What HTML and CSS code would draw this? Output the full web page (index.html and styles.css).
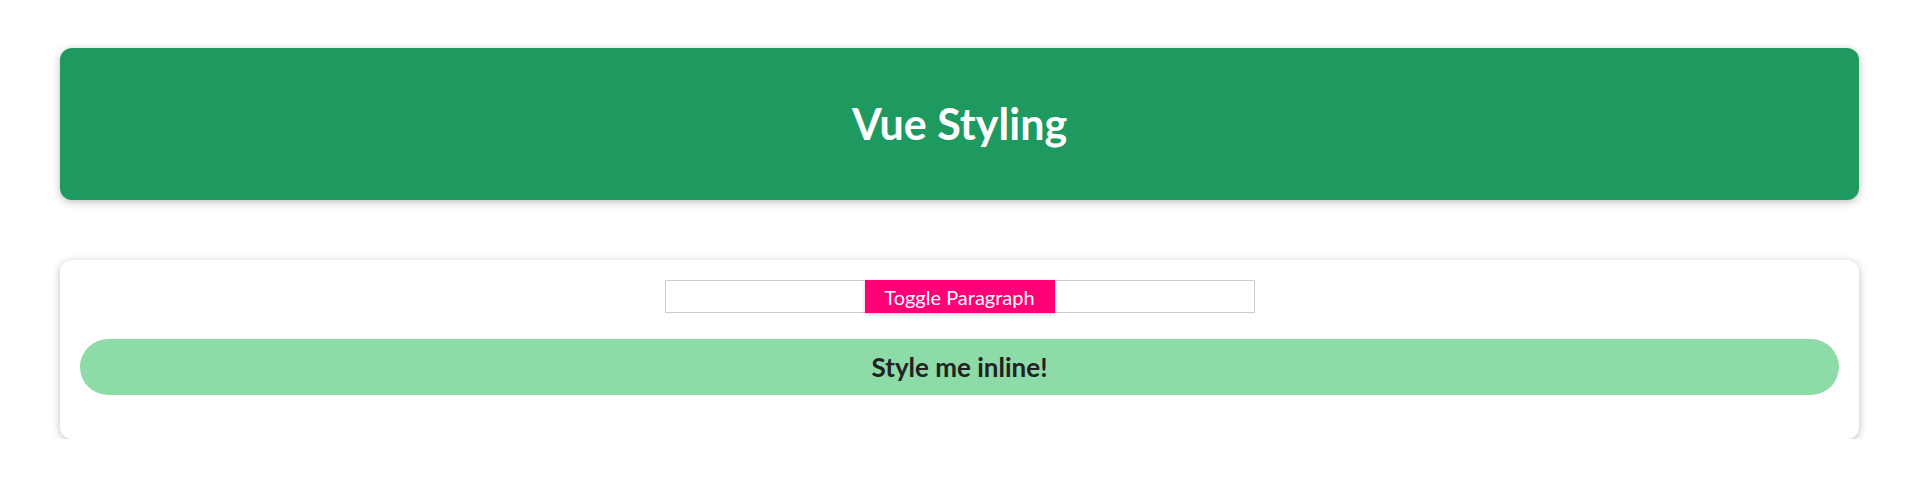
FILE: index.html
```html
<!DOCTYPE html>
<html lang="en">
<head>
<meta charset="utf-8">
<title>Vue Styling</title>
<link rel="stylesheet" href="styles.css">
</head>
<body>
  <header class="app-header">
    <h2 class="app-title">Vue Styling</h2>
  </header>
  <section class="card">
    <div class="toggle-row">
      <button class="toggle-btn">Toggle Paragraph</button>
    </div>
    <p class="inline-pill">Style me inline!</p>
  </section>
</body>
</html>
```

FILE: styles.css
```css
* { box-sizing: border-box; }
html, body { margin: 0; padding: 0; background: #fff; }
body { font-family: "Lato", "Noto Sans", sans-serif; }

.app-header {
  margin: 48px 60px 0;
  height: 152px;
  background: #1e995f;
  border-radius: 12px;
  box-shadow: 0 2px 8px rgba(0, 0, 0, 0.26);
  display: flex;
  align-items: center;
  justify-content: center;
  color: #fff;
}
.app-title {
  margin: 0;
  font-size: 43px;
  line-height: 48px;
  font-weight: 700;
}

.card {
  margin: 60px 60px 0;
  padding: 20px 20px 44px;
  background: #fff;
  border-radius: 12px;
  box-shadow: 0 2px 8px rgba(0, 0, 0, 0.26);
}
.toggle-row {
  width: 590px;
  height: 33px;
  margin: 0 auto;
  border: 1px solid #ccc;
  display: flex;
  justify-content: center;
}
.toggle-btn {
  margin: -1px 0;
  height: 33px;
  width: 190px;
  border: none;
  background: #ff0077;
  color: #fff;
  font-family: "Lato", "Noto Sans", sans-serif;
  font-size: 20px;
  box-shadow: 0 1px 4px rgba(0, 0, 0, 0.2);
  padding: 0;
}
.inline-pill {
  margin: 26px 0 0;
  height: 56px;
  border-radius: 28px;
  background: #8ddba6;
  color: #222;
  font-size: 26px;
  font-weight: 700;
  display: flex;
  align-items: center;
  justify-content: center;
}
```
